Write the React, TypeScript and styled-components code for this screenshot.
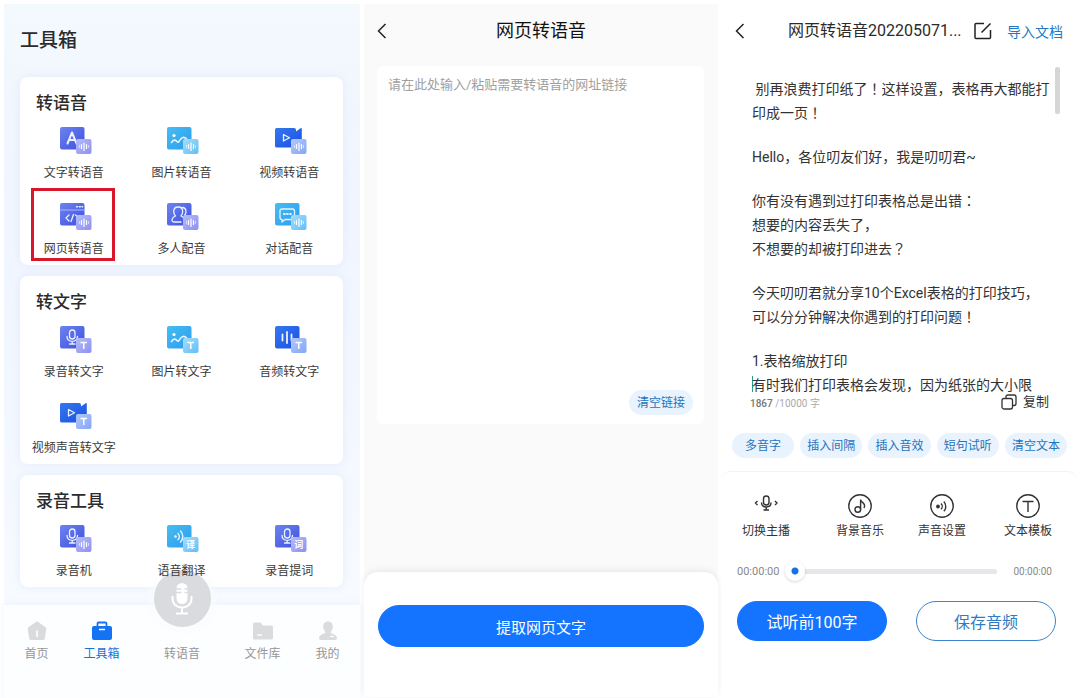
import React from "react";
import styled, { createGlobalStyle } from "styled-components";

const GlobalStyle = createGlobalStyle`
  * { box-sizing: border-box; }
  body {
    margin: 0;
    background: #fff;
    color: #2b2b2b;
    font-family: Roboto, "Noto Sans CJK SC", sans-serif;
    font-size: 12px;
  }
  h1, h2, p { margin: 0; }
  button, textarea, input { font-family: inherit; }
  button { cursor: pointer; }
  a { text-decoration: none; color: inherit; }
`;

const Screens = styled.main`
  display: grid;
  grid-template-columns: 356fr 354fr 354fr;
  gap: 4px;
  min-height: 100vh;
  padding: 4px 4px 0;
`;

const Screen = styled.section<{ $bg: string }>`
  display: flex;
  flex-direction: column;
  min-width: 0;
  background: ${(p) => p.$bg};
`;

/* ---------- Toolbox ---------- */

const PageTitle = styled.h1`
  margin: 23px 16px 22px;
  font-size: 19px;
  font-weight: 500;
  line-height: 28px;
`;

const CardList = styled.div`
  display: flex;
  flex-direction: column;
  flex: 1;
  gap: 11px;
  padding: 0 17px 18px 16px;
`;

const Card = styled.section`
  padding: 14px 0 7px;
  border-radius: 8px;
  background: #fff;
  box-shadow: 0 0 8px rgba(190, 208, 245, 0.3);
`;

const CardTitle = styled.h2`
  margin: 0 16px 12px;
  font-size: 17px;
  font-weight: 500;
  line-height: 24px;
`;

const ToolGrid = styled.div`
  display: grid;
  grid-template-columns: repeat(3, 1fr);
  row-gap: 21px;
`;

const Tool = styled.button`
  position: relative;
  display: flex;
  flex-direction: column;
  align-items: center;
  gap: 9px;
  padding: 0;
  border: 0;
  background: none;
  color: #3a3a3a;
  font-size: 12px;
  line-height: 18px;
  white-space: nowrap;
`;

const Highlight = styled.span`
  position: absolute;
  inset: -15px 13px -3px 11px;
  border: 3px solid #d9162b;
`;

const TabBar = styled.nav`
  display: grid;
  grid-template-columns: 65fr 65fr 96fr 65fr 65fr;
  align-items: start;
  padding: 16px 0 38px;
  background: #fdfeff;
  box-shadow: 0 -2px 6px rgba(225, 232, 245, 0.4);
`;

const Tab = styled.a<{ $active?: boolean }>`
  display: flex;
  flex-direction: column;
  align-items: center;
  gap: 4px;
  color: ${(p) => (p.$active ? "#1671d9" : "#969696")};
  font-size: 12px;
  line-height: 18px;
`;

const MicButton = styled.span`
  display: grid;
  place-items: center;
  width: 57px;
  height: 57px;
  margin: -51px 0 14px;
  border-radius: 50%;
  background: #dadbde;
  box-shadow: 0 0 8px 4px rgba(250, 251, 254, 0.8);
`;

type Tone = "indigo" | "cyan" | "blue";
type Badge = "wave" | "T" | "译" | "词";
type Shape = "letter" | "image" | "video" | "web" | "people" | "chat" | "mic" | "bars" | "speaker";

const tones: Record<Tone, [string, string, string, string]> = {
  indigo: ["#6c84ef", "#3f4fdf", "#b5bdf8", "#8e8ff0"],
  cyan: ["#46bdf0", "#2c9cf0", "#a5def9", "#62bef6"],
  blue: ["#3478ee", "#1b50e4", "#b3c9fa", "#84a6f5"],
};

const shapes: Record<Shape, React.ReactNode> = {
  letter: <path d="M7.500 16.500 12 5.500l4.500 11M9 13h6" strokeWidth="2" />,
  image: (
    <>
      <circle cx="7" cy="8.500" r="1.600" fill="#fff" stroke="none" />
      <path d="M4.500 15.500c2-3 4-3 5.500-1 1 1.200 2 .5 3-1.500 1.500-3 4.500-3.500 6.500-1" strokeWidth="1.600" />
    </>
  ),
  video: <path d="M8.500 7.500v6.500l6-3.200z" />,
  web: (
    <>
      <path d="M0 7h24.500" stroke="#a9b8fb" strokeWidth="1" />
      <path d="M16.500 3.800h1M19.300 3.800h1M22 3.800h.6" strokeWidth="1.400" />
      <path d="m9 12-3 3 3 3M13.500 11.500l-2.500 7" />
      <path d="m15.500 12 1.500 1.500" />
    </>
  ),
  people: (
    <>
      <path d="M14 19H7q-2 0-2-1.500c0-2.500 1.500-3.700 3.500-4.500-1.200-1.200-1.800-2.600-1.800-4.200 0-2.800 1.800-4.800 4.500-4.800s4.500 2 4.500 4.800c0 1.600-.6 3-1.800 4.200q1.500.6 2.300 1.500" />
      <path d="M15 4.500c2.500 0 4 1.800 4 4.300q0 2-1.300 3.200" />
    </>
  ),
  chat: (
    <>
      <path d="M7 6h10.500q2 0 2 2v6.500q0 2-2 2H10l-3 2.500v-2.500q-2 0-2-2V8q0-2 2-2z" />
      <path d="M9 11h.8M12 11h.8M15 11h.8" strokeWidth="2" />
    </>
  ),
  mic: (
    <>
      <rect x="9.500" y="4" width="5.500" height="9" rx="2.750" />
      <path d="M7 10.500c0 3 2 4.800 5.200 4.800s5.300-1.800 5.300-4.800M12.200 15.300v2.700M9.500 18h5.500" />
    </>
  ),
  bars: <path d="M7.500 8.500v6M12 6v11M16.500 8.500v6" strokeWidth="1.800" />,
  speaker: (
    <>
      <circle cx="8.500" cy="11.500" r="1.200" fill="#fff" stroke="none" />
      <path d="M11 8.500c1.700 1.700 1.700 4.300 0 6M13.500 6c3 3 3 8 0 11" strokeWidth="1.500" />
    </>
  ),
};

function ToolIcon({ id, tone, shape, badge }: { id: string; tone: Tone; shape: Shape; badge: Badge }) {
  const [from, to, badgeFrom, badgeTo] = tones[tone];
  return (
    <svg width="36" height="28" viewBox="-4 0 36 28" aria-hidden="true">
      <defs>
        <linearGradient id={`${id}-m`} x1="0" y1="0" x2="1" y2="1">
          <stop offset="0" stopColor={from} />
          <stop offset="1" stopColor={to} />
        </linearGradient>
        <linearGradient id={`${id}-b`} x1="0" y1="0" x2="1" y2="1">
          <stop offset="0" stopColor={badgeFrom} />
          <stop offset="1" stopColor={badgeTo} />
        </linearGradient>
      </defs>
      {shape === "video" ? (
        <path
          d="M1.500 1H19q2 0 2 2v1.500L25.500 1.200q1.300-.6 1.300.6V19q0 1.500-1.500 1.500H2Q0 20.500 0 19V2.500Q0 1 1.500 1z"
          fill={`url(#${id}-m)`}
        />
      ) : (
        <rect width="24.500" height="22.500" rx="2" fill={`url(#${id}-m)`} />
      )}
      <g fill="none" stroke="#e9f3ff" strokeWidth="1.300" strokeLinecap="round" strokeLinejoin="round">
        {shapes[shape]}
      </g>
      <rect x="16" y="12" width="15.500" height="15" rx="2" fill={`url(#${id}-b)`} />
      {badge === "wave" && (
        <g stroke="#fff" strokeLinecap="round">
          <path d="M19.500 18.500v2M28.500 18.500v2" strokeWidth="1" opacity=".6" />
          <path d="M21.500 17.500v4M24 16v7.500M26.500 17.500v4" strokeWidth="1.200" />
        </g>
      )}
      {badge === "T" && <path d="M20.500 16.500h6.500M23.750 16.500v6.500" stroke="#fff" strokeWidth="1.500" />}
      {(badge === "译" || badge === "词") && (
        <text x="23.750" y="23" fill="#fff" fontSize="9" fontWeight="700" textAnchor="middle">
          {badge}
        </text>
      )}
    </svg>
  );
}

interface ToolDef {
  label: string;
  tone: Tone;
  shape: Shape;
  badge: Badge;
  marked?: boolean;
}

const groups: { title: string; tools: ToolDef[] }[] = [
  {
    title: "转语音",
    tools: [
      { label: "文字转语音", tone: "indigo", shape: "letter", badge: "wave" },
      { label: "图片转语音", tone: "cyan", shape: "image", badge: "wave" },
      { label: "视频转语音", tone: "blue", shape: "video", badge: "wave" },
      { label: "网页转语音", tone: "indigo", shape: "web", badge: "wave", marked: true },
      { label: "多人配音", tone: "indigo", shape: "people", badge: "wave" },
      { label: "对话配音", tone: "cyan", shape: "chat", badge: "wave" },
    ],
  },
  {
    title: "转文字",
    tools: [
      { label: "录音转文字", tone: "indigo", shape: "mic", badge: "T" },
      { label: "图片转文字", tone: "cyan", shape: "image", badge: "T" },
      { label: "音频转文字", tone: "blue", shape: "bars", badge: "T" },
      { label: "视频声音转文字", tone: "blue", shape: "video", badge: "T" },
    ],
  },
  {
    title: "录音工具",
    tools: [
      { label: "录音机", tone: "indigo", shape: "mic", badge: "wave" },
      { label: "语音翻译", tone: "cyan", shape: "speaker", badge: "译" },
      { label: "录音提词", tone: "indigo", shape: "mic", badge: "词" },
    ],
  },
];

function Toolbox() {
  return (
    <Screen $bg="linear-gradient(#f4f9fe, #f0f5ff 25%, #f3f7ff 60%, #fafcff)">
      <PageTitle>工具箱</PageTitle>
      <CardList>
        {groups.map((group, g) => (
          <Card key={group.title}>
            <CardTitle>{group.title}</CardTitle>
            <ToolGrid>
              {group.tools.map((tool, t) => (
                <Tool key={tool.label} type="button">
                  <ToolIcon id={`tool-${g}-${t}`} tone={tool.tone} shape={tool.shape} badge={tool.badge} />
                  {tool.label}
                  {tool.marked && <Highlight />}
                </Tool>
              ))}
            </ToolGrid>
          </Card>
        ))}
      </CardList>
      <TabBar>
        <Tab href="#home">
          <svg width="20" height="20" viewBox="0 0 20 20" aria-hidden="true">
            <path d="M8.800 1q1.200-.8 2.400 0l7.300 5.300q1 .7.8 1.900l-1.500 9.300q-.3 1.500-1.800 1.500H4q-1.500 0-1.800-1.500L.7 8.200Q.5 7 1.500 6.300z" fill="#dadbdd" />
            <path d="M10 10v5.500" stroke="#fff" strokeWidth="1.600" strokeLinecap="round" />
          </svg>
          首页
        </Tab>
        <Tab href="#tools" $active>
          <svg width="20" height="20" viewBox="0 0 20 20" aria-hidden="true">
            <path d="M5.500 6V2.500q0-1 1-1h7q1 0 1 1V6" fill="none" stroke="#1473f5" strokeWidth="1.800" />
            <rect y="5" width="20" height="14" rx="2" fill="#1473f5" />
            <path d="M7 8.500h6" stroke="#fff" strokeWidth="1.500" />
          </svg>
          工具箱
        </Tab>
        <Tab href="#voice">
          <MicButton>
            <svg width="22" height="32" viewBox="0 0 22 32" aria-hidden="true">
              <rect x="5.500" y="0" width="11" height="21" rx="5.500" fill="#fff" />
              <path d="M5 6h5.500M5 9.500h5.500M17 6h-3.500M17 9.500h-3.500" stroke="#dadbde" strokeWidth="1.300" />
              <path d="M1.500 13v2.500c0 5.500 4 9 9.500 9s9.500-3.500 9.500-9V13M11 24.500V30M5 30.500h12" fill="none" stroke="#fff" strokeWidth="2" />
            </svg>
          </MicButton>
          转语音
        </Tab>
        <Tab href="#files">
          <svg width="20" height="20" viewBox="0 0 20 20" aria-hidden="true">
            <path d="M0 3q0-1.500 1.500-1.500h6L10 4.500h8.500Q20 4.500 20 6v11q0 1.500-1.500 1.500h-17Q0 18.500 0 17z" fill="#dadbdd" />
            <path d="M4 14h5" stroke="#fff" strokeWidth="1.400" />
          </svg>
          文件库
        </Tab>
        <Tab href="#mine">
          <svg width="20" height="20" viewBox="0 0 20 20" aria-hidden="true">
            <path d="M10 .5c3 0 4.800 2.200 4.800 5.200 0 2.300-1 4-2.300 5.200 0 2 6.500 2.100 6.500 6q0 2.100-2 2.100H3q-2 0-2-2.100c0-3.900 6.500-4 6.500-6C6.200 9.700 5.200 8 5.200 5.700 5.200 2.700 7 .5 10 .5z" fill="#dadbdd" />
            <path d="M12 15.500h4" stroke="#fff" strokeWidth="1.300" />
          </svg>
          我的
        </Tab>
      </TabBar>
    </Screen>
  );
}

/* ---------- Shared controls ---------- */

const IconButton = styled.button`
  display: grid;
  flex: none;
  place-items: center;
  padding: 0;
  border: 0;
  background: none;
  color: #222;
`;

const Pill = styled.button`
  height: 25px;
  min-width: 62px;
  padding: 0 7px;
  border: 0;
  border-radius: 13px;
  background: #e9f3fe;
  color: #2473bd;
  font-size: 12px;
  line-height: 18px;
  white-space: nowrap;
`;

const MainButton = styled.button<{ $outline?: boolean }>`
  height: 40px;
  padding: 0;
  border: 1px solid ${(p) => (p.$outline ? "#3a84c9" : "#1473ff")};
  border-radius: 20px;
  background: ${(p) => (p.$outline ? "#fff" : "#1473ff")};
  color: ${(p) => (p.$outline ? "#2f7cc4" : "#fff")};
  font-size: 16px;
`;

function BackButton() {
  return (
    <IconButton type="button" aria-label="返回">
      <svg width="10" height="16" viewBox="0 0 10 16" aria-hidden="true">
        <path d="M8.500 1 1.500 8l7 7" fill="none" stroke="currentColor" strokeWidth="1.500" />
      </svg>
    </IconButton>
  );
}

/* ---------- Web page to speech ---------- */

const LinkHeader = styled.header`
  display: grid;
  grid-template-columns: 10px 1fr 10px;
  align-items: center;
  height: 54px;
  padding: 0 13px;
`;

const LinkTitle = styled.h1`
  font-size: 18px;
  font-weight: 400;
  line-height: 26px;
  text-align: center;
  color: #111;
`;

const LinkCard = styled.div`
  display: flex;
  flex: 1;
  flex-direction: column;
  align-items: flex-end;
  margin: 8px 14px 148px 13px;
  padding: 8px 11px 9px;
  border-radius: 6px;
  background: #fff;
`;

const LinkInput = styled.textarea`
  flex: 1;
  width: 100%;
  padding: 0;
  border: 0;
  outline: 0;
  resize: none;
  background: none;
  font-size: 13px;
  line-height: 22px;
  &::placeholder { color: #a0a0a0; }
`;

const ClearLink = styled(Pill)`
  padding: 0 8px;
`;

const Sheet = styled.footer`
  display: grid;
  padding: 33px 14px 50px;
  border-radius: 14px 14px 0 0;
  background: #fff;
  box-shadow: 0 -2px 6px rgba(0, 0, 0, 0.07);
`;

const SheetArea = styled.div`
  padding-bottom: 4px;
  background: linear-gradient(transparent 50%, #fff 50%);
`;

const ExtractButton = styled(MainButton)`
  height: 42px;
  border-radius: 21px;
  font-size: 15px;
`;

function LinkScreen() {
  return (
    <Screen $bg="#fafafa">
      <LinkHeader>
        <BackButton />
        <LinkTitle>网页转语音</LinkTitle>
      </LinkHeader>
      <LinkCard>
        <LinkInput aria-label="网址链接" placeholder="请在此处输入/粘贴需要转语音的网址链接" />
        <ClearLink type="button">清空链接</ClearLink>
      </LinkCard>
      <SheetArea>
        <Sheet>
          <ExtractButton type="button">提取网页文字</ExtractButton>
        </Sheet>
      </SheetArea>
    </Screen>
  );
}

/* ---------- Text editor ---------- */

const EditorHeader = styled.header`
  display: flex;
  align-items: center;
  height: 54px;
  padding: 0 13px;
`;

const DocTitle = styled.h1`
  flex: 1;
  min-width: 0;
  margin: 0 12px 0 43px;
  font-size: 16px;
  font-weight: 400;
  line-height: 24px;
  white-space: nowrap;
`;

const ImportLink = styled.a`
  flex: none;
  margin-left: 15px;
  color: #2478c8;
  font-size: 14px;
`;

const EditorBody = styled.div`
  display: flex;
  flex: 1;
  align-items: flex-start;
  justify-content: space-between;
  padding: 9px 16px 0 30px;
`;

const Document = styled.div`
  display: flex;
  flex: 1;
  flex-direction: column;
  gap: 20px;
  padding-top: 10px;
  outline: 0;
  color: #333;
  font-size: 14px;
  line-height: 24px;
  white-space: pre-wrap;
`;

/* Full-width marks drawn in the middle of their em box. */
const Mark = styled.span`
  font-family: "Noto Sans CJK JP", sans-serif;
  line-height: 1;
`;

const Caret = styled.span`
  display: inline-block;
  width: 1px;
  height: 16px;
  margin-right: -1px;
  vertical-align: -2px;
  background: #2a9d8f;
`;

const ScrollThumb = styled.div`
  width: 5px;
  height: 47px;
  border-radius: 2px;
  background: #d6d6d6;
`;

const EditorStatus = styled.div`
  display: flex;
  align-items: center;
  justify-content: space-between;
  height: 18px;
  margin-top: -4px;
  padding: 0 27px 0 28px;
  color: #aaa;
  font-size: 10px;
`;

const Count = styled.b`
  color: #777;
  font-weight: 500;
`;

const CopyButton = styled(IconButton)`
  grid-auto-flow: column;
  gap: 6px;
  color: #333;
  font-size: 13px;
  line-height: 18px;
`;

const PillRow = styled.div`
  display: flex;
  justify-content: space-between;
  padding: 22px 9px 13px 10px;
`;

const Player = styled.footer`
  padding: 22px 0 60px;
  border-top: 1px solid #f2f3f4;
  border-radius: 8px 8px 0 0;
`;

const ActionRow = styled.div`
  display: grid;
  grid-template-columns: 94fr 82fr 86fr 48px;
  padding: 0 24px 0 20px;
`;

const Action = styled(IconButton)`
  justify-self: start;
  gap: 4px;
  width: 48px;
  color: #333;
  font-size: 12px;
  line-height: 18px;
  white-space: nowrap;
`;

const SeekRow = styled.div`
  display: flex;
  align-items: center;
  padding: 20px 24px 19px 15px;
  color: #888;
`;

const Elapsed = styled.span`
  font-size: 11px;
`;

const Total = styled.span`
  font-size: 10px;
`;

const Seek = styled.input`
  flex: 1;
  min-width: 0;
  height: 22px;
  margin: 0 16px 0 6px;
  appearance: none;
  background: none;
  &::-webkit-slider-runnable-track {
    height: 5px;
    border-radius: 3px;
    background: #e5e7ea;
  }
  &::-webkit-slider-thumb {
    appearance: none;
    width: 20px;
    height: 20px;
    margin-top: -8px;
    border-radius: 50%;
    background: radial-gradient(circle, #1473e6 0 3px, #fff 4px);
    box-shadow: 0 1px 3px rgba(0, 0, 0, 0.18);
  }
`;

const ButtonRow = styled.div`
  display: grid;
  grid-template-columns: 150fr 140fr;
  gap: 29px;
  padding: 0 20px 0 15px;
`;

const pills = ["多音字", "插入间隔", "插入音效", "短句试听", "清空文本"];

const actions = [
  {
    label: "切换主播",
    icon: (
      <>
        <rect x="9.500" y="2" width="5.500" height="9" rx="2.750" />
        <path d="M7.500 8.500c0 3 2 4.500 4.700 4.500S17 11.500 17 8.500M12.200 13v3M9.500 16h5.500M3.500 7 1.500 9l2 2M21 7l2 2-2 2" />
      </>
    ),
  },
  {
    label: "背景音乐",
    icon: (
      <>
        <circle cx="12" cy="12" r="11.200" />
        <circle cx="9.800" cy="15.500" r="2.800" />
        <path d="M12.600 15.500V5.500c.5 3 4 3 4 6.500 0 .8-.3 1.500-.8 2" />
      </>
    ),
  },
  {
    label: "声音设置",
    icon: (
      <>
        <circle cx="12" cy="12" r="11.200" />
        <circle cx="8" cy="12.500" r="1.200" fill="currentColor" />
        <path d="M11 9.500c1.600 1.600 1.600 4.200 0 5.800M13.800 7.500c2.600 2.600 2.600 7.200 0 9.800" />
      </>
    ),
  },
  {
    label: "文本模板",
    icon: (
      <>
        <circle cx="12" cy="12" r="11.200" />
        <path d="M6.500 7.500h11M12 7.500v10.500" />
      </>
    ),
  },
];

function EditorScreen() {
  return (
    <Screen $bg="#fff">
      <EditorHeader>
        <BackButton />
        <DocTitle>网页转语音202205071...</DocTitle>
        <IconButton type="button" aria-label="重命名">
          <svg width="18" height="18" viewBox="0 0 18 18" aria-hidden="true">
            <path d="M10 1.500H2q-1 0-1 1v13q0 1 1 1h13.500q1 0 1-1V8M7.500 10.500 16.500 1.500" fill="none" stroke="currentColor" strokeWidth="1.500" />
          </svg>
        </IconButton>
        <ImportLink href="#import">导入文档</ImportLink>
      </EditorHeader>
      <EditorBody>
        <Document role="textbox" aria-multiline="true" aria-label="正文" contentEditable suppressContentEditableWarning>
          <p>
            {" 别再浪费打印纸了"}
            <Mark>！</Mark>
            这样设置，表格再大都能打
            <br />
            印成一页<Mark>！</Mark>
          </p>
          <p>Hello，各位叨友们好，我是叨叨君~</p>
          <p>
            你有没有遇到过打印表格总是出错<Mark>：</Mark>
            <br />
            想要的内容丢失了，
            <br />
            不想要的却被打印进去<Mark>？</Mark>
          </p>
          <p>
            今天叨叨君就分享10个Excel表格的打印技巧，
            <br />
            可以分分钟解决你遇到的打印问题<Mark>！</Mark>
          </p>
          <p>
            1.表格缩放打印
            <br />
            <Caret />
            有时我们打印表格会发现，因为纸张的大小限
          </p>
        </Document>
        <ScrollThumb />
      </EditorBody>
      <EditorStatus>
        <span>
          <Count>1867</Count> /10000 字
        </span>
        <CopyButton type="button">
          <svg width="16" height="16" viewBox="0 0 16 16" fill="none" stroke="currentColor" strokeWidth="1.300" aria-hidden="true">
            <rect x="1" y="4.500" width="10.500" height="10.500" rx="2" />
            <path d="M5 4V3q0-2 2-2h6q2 0 2 2v6.500q0 2-2 2h-1" />
          </svg>
          复制
        </CopyButton>
      </EditorStatus>
      <PillRow>
        {pills.map((label) => (
          <Pill key={label} type="button">
            {label}
          </Pill>
        ))}
      </PillRow>
      <Player>
        <ActionRow>
          {actions.map(({ label, icon }) => (
            <Action key={label} type="button">
              <svg width="24" height="24" viewBox="0 0 24 24" fill="none" stroke="currentColor" strokeWidth="1.400" aria-hidden="true">
                {icon}
              </svg>
              {label}
            </Action>
          ))}
        </ActionRow>
        <SeekRow>
          <Elapsed>00:00:00</Elapsed>
          <Seek type="range" min="0" max="100" defaultValue="0" aria-label="播放进度" />
          <Total>00:00:00</Total>
        </SeekRow>
        <ButtonRow>
          <MainButton type="button">试听前100字</MainButton>
          <MainButton type="button" $outline>
            保存音频
          </MainButton>
        </ButtonRow>
      </Player>
    </Screen>
  );
}

export default function App() {
  return (
    <>
      <GlobalStyle />
      <Screens>
        <Toolbox />
        <LinkScreen />
        <EditorScreen />
      </Screens>
    </>
  );
}
